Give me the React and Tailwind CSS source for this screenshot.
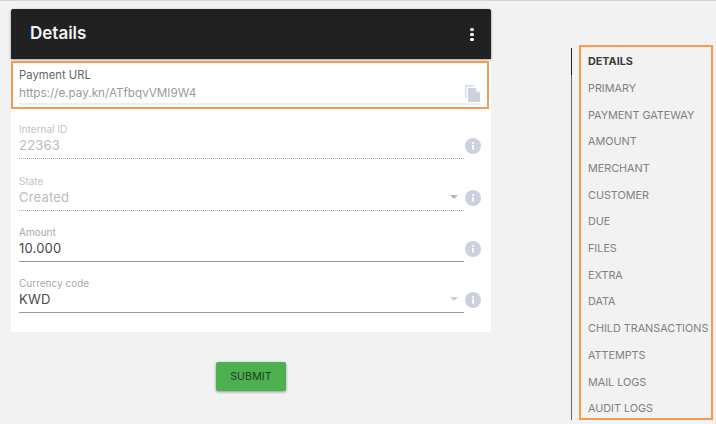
import React from "react";

const FONT = "font-['Inter','Open_Sans',sans-serif]";

const navItems = [
  "DETAILS",
  "PRIMARY",
  "PAYMENT GATEWAY",
  "AMOUNT",
  "MERCHANT",
  "CUSTOMER",
  "DUE",
  "FILES",
  "EXTRA",
  "DATA",
  "CHILD TRANSACTIONS",
  "ATTEMPTS",
  "MAIL LOGS",
  "AUDIT LOGS",
];

const fields = [
  { label: "Internal ID", value: "22363", disabled: true },
  { label: "State", value: "Created", disabled: true, select: true },
  { label: "Amount", value: "10.000" },
  { label: "Currency code", value: "KWD", select: true },
];

function InfoIcon() {
  return (
    <svg width="16" height="16" viewBox="0 0 16 16" className="shrink-0">
      <circle cx="8" cy="8" r="8" fill="#cdd1df" />
      <rect x="7.1" y="7" width="1.8" height="4.6" fill="#fff" />
      <rect x="7.1" y="4.2" width="1.8" height="1.8" fill="#fff" />
    </svg>
  );
}

function CopyIcon() {
  return (
    <svg width="17" height="17" viewBox="0 0 17 17" className="shrink-0">
      <path d="M1 0h9v1.5H2.5V13H1z" fill="#d9dce7" />
      <path d="M4 3h7.5L16 7.5V17H4z" fill="#cdd1df" />
      <path d="M11.5 3v4.5H16z" fill="#e6e8f0" />
    </svg>
  );
}

function Field({ label, value, disabled, select }) {
  return (
    <div className="flex items-start h-[51px] first:h-[52px]">
      <div
        className={`flex-1 h-[37px] mt-[4px] border-b ${
          disabled ? "border-dotted border-[#a8a8a8]" : "border-[#9a9a9a]"
        }`}
      >
        <div className={`text-[10px] leading-[14px] ${disabled ? "text-[#c4c4c4]" : "text-[#a8a8a8]"}`}>
          {label}
        </div>
        <div className="flex items-center justify-between h-[18px] pr-[6px]">
          <span className={`text-[13px] tracking-[0.2px] leading-[18px] ${disabled ? "text-[#bcbcbc]" : "text-[#4a4a4a]"}`}>
            {value}
          </span>
          {select && (
            <span
              className={`w-0 h-0 border-x-[4px] border-x-transparent border-t-[4px] ${
                disabled ? "border-t-[#b5b5b5]" : "border-t-[#cdd1df]"
              }`}
            />
          )}
        </div>
      </div>
      <div className="ml-[1px] mt-[20px]">
        <InfoIcon />
      </div>
    </div>
  );
}

export default function App() {
  return (
    <div className={`${FONT} w-[716px] h-[424px] overflow-hidden bg-[#f2f2f2] border-t border-[#d4d4d4] flex`}>
      {/* Left column */}
      <div className="w-[480px] ml-[11px] mt-[8px]">
        <div className="bg-white">
          <div className="h-[50px] bg-[#212121] rounded-t-[2px] shadow-[0_1px_3px_rgba(0,0,0,0.4)] flex items-center justify-between pl-[19px] pr-[17px]">
            <span className="text-[17px] font-semibold text-[#f2f2f2]">Details</span>
            <div className="flex flex-col gap-[2px]">
              <span className="w-[4px] h-[3px] bg-white rounded-full" />
              <span className="w-[4px] h-[3px] bg-white rounded-full" />
              <span className="w-[4px] h-[3px] bg-white rounded-full" />
            </div>
          </div>

          {/* Payment URL */}
          <div className="mt-[2px] w-[478px] h-[48px] border-2 border-[#f79a4c] px-[6px] pt-[4px]">
            <div className="text-[11.3px] leading-[16px] text-[#666666]">Payment URL</div>
            <div className="flex items-end justify-between h-[22px] border-b-2 border-[#eeeeee]">
              <span className="text-[11.7px] leading-[20px] text-[#9a9a9a]">https://e.pay.kn/ATfbqvVMI9W4</span>
              <span className="mb-[1px]">
                <CopyIcon />
              </span>
            </div>
          </div>

          <div className="pl-[8px] pr-[10px] pt-[9px] pb-[9px]">
            {fields.map((f) => (
              <Field key={f.label} {...f} />
            ))}
          </div>
        </div>

        <div className="flex justify-center mt-[30px]">
          <button className="w-[70px] h-[29px] bg-[#4caf50] rounded-[2px] shadow-[0_1px_3px_rgba(0,0,0,0.4)] text-[10.5px] tracking-[0.2px] text-[#1f3d20]">
            SUBMIT
          </button>
        </div>
      </div>

      {/* Section nav */}
      <div className="flex ml-[80px] mt-[44px]">
        <div className="flex flex-col w-px mt-[3px] h-[372px]">
          <div className="h-[27px] bg-[#222222]" />
          <div className="flex-1 bg-[#666666]" />
        </div>
        <div className="ml-[7px] w-[134px] h-[375px] border-2 border-[#f79a4c] pl-[7px] pt-[2px]">
          {navItems.map((item, i) => (
            <div
              key={item}
              className={`h-[26.7px] flex items-center text-[10.8px] whitespace-nowrap ${
                i === 0 ? "font-bold text-[#3a3a3a]" : "text-[#808080]"
              }`}
            >
              {item}
            </div>
          ))}
        </div>
      </div>
    </div>
  );
}
